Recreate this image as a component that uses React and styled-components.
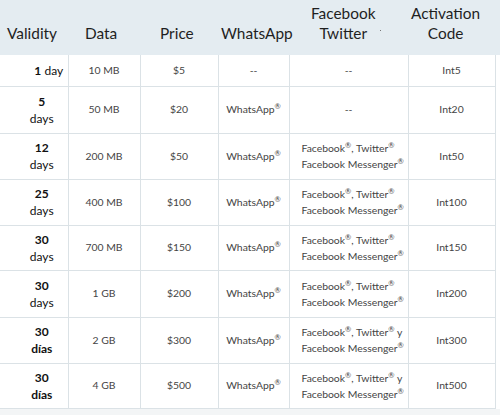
import React from 'react';
import styled, { createGlobalStyle } from 'styled-components';

const GlobalStyle = createGlobalStyle`
  html, body {
    margin: 0;
    padding: 0;
    background: #ffffff;
  }
  body {
    font-family: Lato, "Open Sans", sans-serif;
    color: #333;
  }
`;

const Page = styled.div`
  width: 500px;
  height: 415px;
  overflow: hidden;
  background: #f3f5f6;
`;

const Table = styled.table`
  border-collapse: collapse;
  table-layout: fixed;
  width: 500px;
  background: #ffffff;
`;

const HeadRow = styled.tr`
  height: 55px;
`;

const HeadCell = styled.th`
  padding: 0 0 12px ${p => p.$pl || 0}px;
  background: #e4ecf1;
  font-weight: 400;
  font-size: 15.4px;
  line-height: 20px;
  color: #1f1f1f;
  vertical-align: bottom;
  white-space: nowrap;
  overflow: visible;
  text-align: left;
  position: relative;
  z-index: ${p => (p.$front ? 1 : 0)};
`;

const Stack = styled.span`
  display: inline-block;
  text-align: center;
`;

const Dot = styled.span`
  position: absolute;
  left: 91px;
  top: 30px;
  width: 1px;
  height: 1px;
  background: #777;
`;

const Row = styled.tr`
  height: ${p => p.$h}px;
`;

const Cell = styled.td`
  border: 1px solid #dbe2e6;
  border-top: ${p => (p.$first ? 'none' : '1px solid #dbe2e6')};
  font-size: 10.4px;
  line-height: 15px;
  color: #444;
  text-align: center;
  vertical-align: middle;
  white-space: nowrap;
  padding: 0;
  &:first-child {
    border-left: none;
  }
`;

const ValidityCell = styled(Cell)`
  font-size: 12px;
  line-height: 17px;
  color: #111;
  text-align: center;
  padding-left: ${p => (p.$single ? 30 : 16)}px;
`;

const Num = styled.b`
  font-weight: 700;
`;

const Unit = styled.span`
  font-weight: ${p => (p.$bold ? 700 : 400)};
`;

const Filler = styled.td`
  border: none;
  background: #ffffff;
`;

const Networks = styled.div`
  text-align: left;
  padding-left: 12px;
  line-height: 16px;
`;

const R = styled.sup`
  font-size: 7.5px;
  vertical-align: 4px;
  line-height: 0;
`;

const plans = [
  { num: '1', unit: 'day', single: true, data: '10 MB', price: '$5', wa: false, social: 0, code: 'Int5', h: 31 },
  { num: '5', unit: 'days', data: '50 MB', price: '$20', wa: true, social: 0, code: 'Int20', h: 47 },
  { num: '12', unit: 'days', data: '200 MB', price: '$50', wa: true, social: 1, code: 'Int50', h: 46 },
  { num: '25', unit: 'days', data: '400 MB', price: '$100', wa: true, social: 1, code: 'Int100', h: 46 },
  { num: '30', unit: 'days', data: '700 MB', price: '$150', wa: true, social: 1, code: 'Int150', h: 45 },
  { num: '30', unit: 'days', data: '1 GB', price: '$200', wa: true, social: 1, code: 'Int200', h: 47 },
  { num: '30', unit: 'días', bold: true, data: '2 GB', price: '$300', wa: true, social: 2, code: 'Int300', h: 46 },
  { num: '30', unit: 'días', bold: true, data: '4 GB', price: '$500', wa: true, social: 2, code: 'Int500', h: 45 },
];

function Social({ kind }) {
  if (kind === 0) return <span>--</span>;
  return (
    <Networks>
      Facebook<R>®</R>, Twitter<R>®</R>{kind === 2 ? ' y' : ''}
      <br />
      Facebook Messenger<R>®</R>
    </Networks>
  );
}

export default function App() {
  return (
    <Page>
      <GlobalStyle />
      <Table>
        <colgroup>
          <col style={{ width: 68 }} />
          <col style={{ width: 72 }} />
          <col style={{ width: 78 }} />
          <col style={{ width: 71 }} />
          <col style={{ width: 119 }} />
          <col style={{ width: 87 }} />
          <col style={{ width: 5 }} />
        </colgroup>
        <thead>
          <HeadRow>
            <HeadCell $pl={7}>Validity</HeadCell>
            <HeadCell $pl={17}>Data</HeadCell>
            <HeadCell $pl={20}>Price</HeadCell>
            <HeadCell $pl={3} $front>WhatsApp</HeadCell>
            <HeadCell $pl={22}><Stack>Facebook<br />Twitter</Stack><Dot /></HeadCell>
            <HeadCell $pl={3}><Stack>Activation<br />Code</Stack></HeadCell>
            <HeadCell />
          </HeadRow>
        </thead>
        <tbody>
          {plans.map((p, i) => (
            <Row key={i} $h={p.h}>
              <ValidityCell $first={i === 0} $single={p.single}>
                <Num>{p.num}</Num>
                {p.single ? ' ' : <br />}
                <Unit $bold={p.bold}>{p.unit}</Unit>
              </ValidityCell>
              <Cell $first={i === 0}>{p.data}</Cell>
              <Cell $first={i === 0}>{p.price}</Cell>
              <Cell $first={i === 0}>{p.wa ? <>WhatsApp<R>®</R></> : '--'}</Cell>
              <Cell $first={i === 0}><Social kind={p.social} /></Cell>
              <Cell $first={i === 0}>{p.code}</Cell>
              <Filler />
            </Row>
          ))}
        </tbody>
      </Table>
    </Page>
  );
}
